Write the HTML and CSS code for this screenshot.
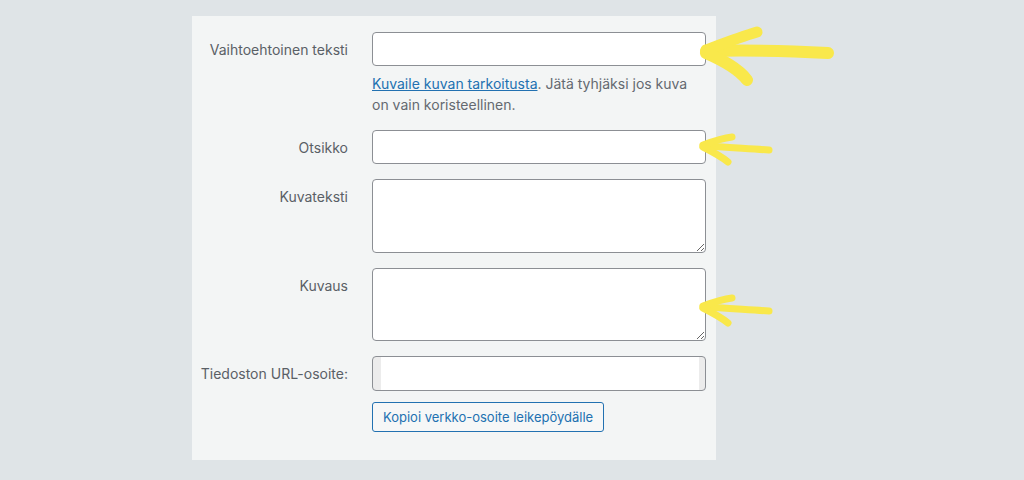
FILE: index.html
```html
<!DOCTYPE html>
<html lang="fi">
<head>
<meta charset="utf-8">
<title>Liitteen tiedot</title>
<link rel="stylesheet" href="styles.css">
</head>
<body>
<div class="panel">
  <form class="fields">
    <label class="label" for="alt">Vaihtoehtoinen teksti</label>
    <div class="control">
      <input class="input" id="alt" type="text">
      <p class="help"><a href="#" class="link">Kuvaile kuvan tarkoitusta</a>. Jätä tyhjäksi jos kuva on vain koristeellinen.</p>
    </div>

    <label class="label" for="title">Otsikko</label>
    <div class="control">
      <input class="input" id="title" type="text">
    </div>

    <label class="label" for="caption">Kuvateksti</label>
    <div class="control">
      <textarea class="textarea" id="caption"></textarea>
    </div>

    <label class="label" for="desc">Kuvaus</label>
    <div class="control">
      <textarea class="textarea short" id="desc"></textarea>
    </div>

    <label class="label" for="url">Tiedoston URL-osoite:</label>
    <div class="control">
      <input class="input url" id="url" type="text" readonly>
      <button type="button" class="copy">Kopioi verkko-osoite leikepöydälle</button>
    </div>
  </form>
</div>

<svg class="arrows" width="1024" height="480" viewBox="0 0 1024 480" aria-hidden="true">
  <g fill="none" stroke="#f9e84b" stroke-linecap="round" stroke-linejoin="round">
    <path d="M706 51 C740 50 790 51 828 53" stroke-width="12"/>
    <path d="M706 50 C722 44 740 37 757 32" stroke-width="11"/>
    <path d="M706 53 C722 60 738 68 747 80" stroke-width="12"/>

    <path d="M703 146 C725 147 750 149 769 150" stroke-width="7"/>
    <path d="M703 145 C714 141 724 138 732 137" stroke-width="7"/>
    <path d="M703 147 C713 152 722 157 728 162" stroke-width="7"/>

    <path d="M703 307 C725 308 750 310 769 311" stroke-width="7"/>
    <path d="M703 306 C714 302 724 299 732 298" stroke-width="7"/>
    <path d="M703 308 C713 313 722 318 728 323" stroke-width="7"/>
  </g>
</svg>
</body>
</html>
```

FILE: styles.css
```css
html, body {
  margin: 0;
  padding: 0;
}

body {
  background: #dfe4e7;
  width: 1024px;
  height: 480px;
  overflow: hidden;
  position: relative;
  font-family: Inter, "Noto Sans", "Liberation Sans", sans-serif;
  font-size: 14px;
  color: #50575e;
}

.panel {
  margin: 16px 0 0 192px;
  width: 524px;
  height: 444px;
  background: #f3f5f5;
  box-sizing: border-box;
  padding: 16px 10px 0 0;
}

.fields {
  display: grid;
  grid-template-columns: 156px 334px;
  column-gap: 24px;
  row-gap: 15px;
  margin: 0;
}

.label {
  text-align: right;
  line-height: 20px;
  padding-top: 8px;
  color: #5a6066;
  white-space: nowrap;
}

.control {
  display: flex;
  flex-direction: column;
}

.input,
.textarea {
  box-sizing: border-box;
  width: 334px;
  margin: 0;
  border: 1px solid #8c8f94;
  border-radius: 4px;
  background: #fff;
  font: inherit;
  padding: 0 8px;
}

.input {
  height: 34px;
}

.input.url {
  height: 35px;
  background: linear-gradient(to right, #ececec 0, #ececec 8px, #fff 8px, #fff calc(100% - 6px), #ececec calc(100% - 6px));
}

.textarea {
  height: 74px;
  resize: both;
  display: block;
}

.textarea.short {
  height: 73px;
}

.help {
  margin: 7px 0 0;
  line-height: 21px;
  color: #646970;
}

.link {
  color: #2271b1;
  text-decoration: underline;
}

.copy {
  margin-top: 11px;
  align-self: flex-start;
  height: 30px;
  box-sizing: border-box;
  padding: 0 10px;
  border: 1px solid #2271b1;
  border-radius: 3px;
  background: #f6f7f7;
  color: #2271b1;
  font-family: inherit;
  font-size: 13px;
}

.arrows {
  position: absolute;
  left: 0;
  top: 0;
  pointer-events: none;
}
```
